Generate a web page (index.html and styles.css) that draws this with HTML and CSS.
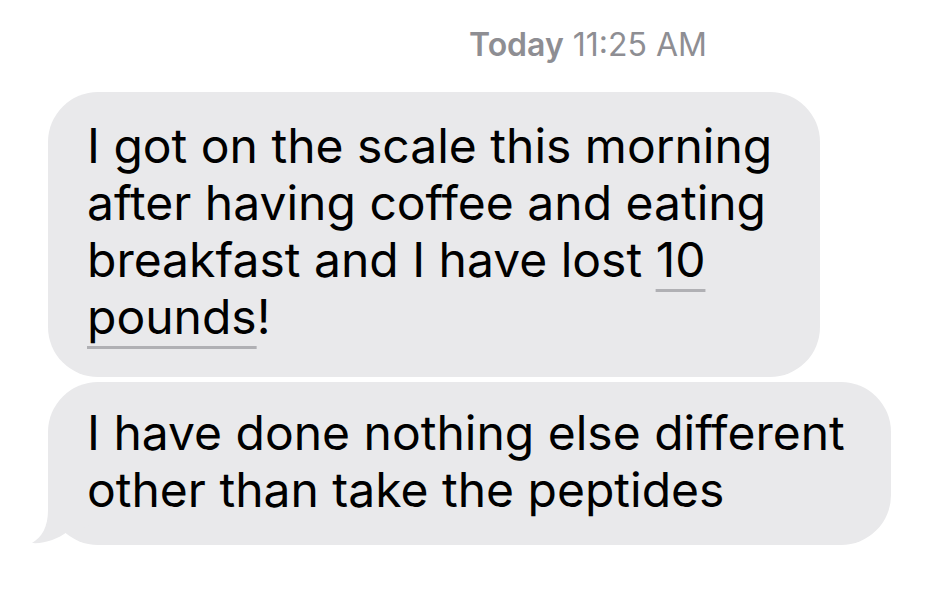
FILE: index.html
```html
<!DOCTYPE html>
<html lang="en">
<head>
<meta charset="utf-8">
<title>Messages</title>
<link rel="stylesheet" href="styles.css">
</head>
<body>
<div class="thread">
  <div class="stamp"><span class="stamp-day">Today</span> 11:25 AM</div>
  <div class="bubble bubble-first">
    <p class="msg">I got on the scale this morning<br>after having coffee and eating<br>breakfast and I have lost <span class="link">10</span><br><span class="link">pounds</span>!</p>
  </div>
  <div class="bubble bubble-last">
    <svg class="tail" width="60" height="50" viewBox="0 0 60 50" aria-hidden="true"><path d="M16 0 L16 15 C16 32 10 42 0 48 C12 49 26 44 35 37 L60 30 L60 0 Z" fill="#e9e9eb"/></svg>
    <p class="msg">I have done nothing else different<br>other than take the peptides</p>
  </div>
</div>
</body>
</html>
```
FILE: styles.css
```css
html, body {
  margin: 0;
  padding: 0;
  background: #ffffff;
}
body {
  font-family: Inter, "Noto Sans", "Liberation Sans", sans-serif;
  color: #000000;
}
.thread {
  display: flex;
  flex-direction: column;
  align-items: flex-start;
  padding: 26px 0 0 48px;
}
.stamp {
  margin-left: 421px;
  font-size: 32px;
  line-height: 38px;
  color: #8e8e93;
  margin-bottom: 28px;
}
.stamp-day {
  font-weight: 600;
}
.bubble {
  position: relative;
  background: #e9e9eb;
  border-radius: 50px;
  box-sizing: border-box;
  padding: 25px 0 0 39px;
}
.bubble-first {
  width: 772px;
  height: 285px;
  margin-bottom: 5px;
}
.bubble-last {
  width: 843px;
  height: 163px;
  padding-top: 22px;
}
.msg {
  position: relative;
  z-index: 1;
  margin: 0;
  font-size: 48px;
  line-height: 57px;
  white-space: nowrap;
}
.link {
  text-decoration: underline;
  text-decoration-color: #b0b0b4;
  text-decoration-thickness: 3px;
  text-underline-offset: 12px;
}
.tail {
  position: absolute;
  left: -16px;
  bottom: 0;
}
```
